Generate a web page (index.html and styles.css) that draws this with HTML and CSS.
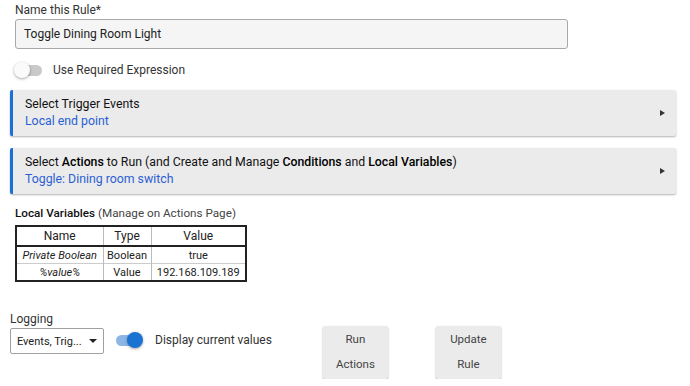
FILE: index.html
```html
<!DOCTYPE html>
<html lang="en">
<head>
    <meta charset="UTF-8">
    <meta name="viewport" content="width=device-width, initial-scale=1.0">
    <title>Rule</title>
    <link rel="stylesheet" href="styles.css">
</head>
<body>
<div class="page">

    <!-- Rule name -->
    <div class="name-field">
        <label class="field-label">Name this Rule*</label>
        <div class="text-input">Toggle Dining Room Light</div>
    </div>

    <!-- Required expression switch -->
    <div class="switch-row top-switch">
        <span class="switch"><span class="knob"></span></span>
        <span class="switch-text">Use Required Expression</span>
    </div>

    <!-- Trigger panel -->
    <div class="panel">
        <div class="panel-body">
            <div class="panel-title">Select Trigger Events</div>
            <div class="panel-sub">Local end point</div>
        </div>
        <span class="arrow"></span>
    </div>

    <!-- Actions panel -->
    <div class="panel">
        <div class="panel-body">
            <div class="panel-title">Select <b>Actions</b> to Run (and Create and Manage <b>Conditions</b> and <b>Local Variables</b>)</div>
            <div class="panel-sub">Toggle: Dining room switch</div>
        </div>
        <span class="arrow"></span>
    </div>

    <!-- Local variables -->
    <div class="vars">
        <div class="vars-title"><b>Local Variables</b> (Manage on Actions Page)</div>
        <table class="vars-table">
            <colgroup>
                <col class="col-name">
                <col class="col-type">
                <col class="col-value">
            </colgroup>
            <tr><th>Name</th><th>Type</th><th>Value</th></tr>
            <tr><td><i>Private Boolean</i></td><td>Boolean</td><td>true</td></tr>
            <tr><td><i>%value%</i></td><td>Value</td><td>192.168.109.189</td></tr>
        </table>
    </div>

    <!-- Bottom controls -->
    <div class="bottom">
        <div class="logging">
            <div class="small-label">Logging</div>
            <div class="select">
                <span>Events, Trig...</span>
                <span class="caret"></span>
            </div>
        </div>
        <div class="switch-row bottom-switch">
            <span class="switch on"><span class="knob"></span></span>
            <span class="switch-text">Display current values</span>
        </div>
        <div class="btn run-btn">Run<br>Actions</div>
        <div class="btn update-btn">Update<br>Rule</div>
    </div>

</div>
</body>
</html>
```

FILE: styles.css
```css
/* General */
body {
    margin: 0;
    font-family: Roboto, "Liberation Sans", sans-serif;
    font-size: 12px;
    color: #333;
    background: #fff;
}

.page {
    padding: 3px 14px 0 10px;
}

/* Name field */
.name-field {
    margin-left: 5px;
}

.field-label {
    display: block;
    line-height: 14px;
    margin-bottom: 2px;
}

.text-input {
    width: 543px;
    height: 28px;
    line-height: 28px;
    padding-left: 8px;
    border: 1px solid #a8a8a8;
    border-radius: 3px;
    background: #f5f5f5;
    color: #222;
}

/* Switches */
.switch-row {
    display: flex;
    align-items: center;
    height: 20px;
}

.top-switch {
    margin: 11px 0 10px 5px;
}

.switch {
    position: relative;
    display: inline-block;
    width: 24px;
    height: 11px;
    margin-left: 3px;
    border-radius: 6px;
    background: #c9c9c9;
}

.switch .knob {
    position: absolute;
    top: -3px;
    left: -4px;
    width: 16px;
    height: 16px;
    border-radius: 50%;
    background: #fafafa;
    box-shadow: 0 1px 3px rgba(0, 0, 0, 0.35);
}

.switch.on {
    margin-left: 0;
    background: #8db6e6;
}

.switch.on .knob {
    left: 11px;
    background: #1a73d1;
}

.switch-text {
    margin-left: 11px;
    color: #333;
}

/* Panels */
.panel {
    display: flex;
    align-items: center;
    justify-content: space-between;
    background: #ebebeb;
    border-left: 3px solid #1c6fd6;
    border-radius: 2px;
    box-shadow: 0 1px 2px rgba(0, 0, 0, 0.3);
    margin-bottom: 12px;
}

.panel-body {
    padding: 6px 12px;
}

.panel-title {
    line-height: 17px;
    font-size: 12.3px;
    color: #111;
}

.panel-title b {
    font-weight: 500;
    color: #000;
}

.panel-sub {
    line-height: 17px;
    font-size: 12.3px;
    color: #2a5fd3;
}

.arrow {
    width: 0;
    height: 0;
    margin-right: 11px;
    border-top: 3px solid transparent;
    border-bottom: 3px solid transparent;
    border-left: 5px solid #333;
}

/* Local variables */
.vars {
    margin: 12px 0 0 5px;
}

.vars-title {
    line-height: 14px;
    font-size: 11.7px;
    color: #444;
    margin-bottom: 5px;
}

.vars-title b {
    font-weight: 500;
    color: #111;
}

.vars-table {
    table-layout: fixed;
    width: 230px;
    border-collapse: collapse;
    border: 2px solid #222;
    font-size: 11px;
    color: #222;
    white-space: nowrap;
}

.vars-table th {
    font-weight: normal;
    font-size: 12px;
    height: 18px;
    border-bottom: 2px solid #222;
}

.vars-table th, .vars-table td {
    text-align: center;
    padding: 0 2px;
    border-left: 1px solid #bbb;
}

.vars-table td {
    height: 16px;
    border-top: 1px solid #ccc;
}

.col-name { width: 87px; }
.col-type { width: 48px; }
.col-value { width: 95px; }

/* Bottom row */
.bottom {
    display: flex;
    align-items: flex-start;
    margin-top: 30px;
}

.small-label {
    font-size: 12px;
    line-height: 14px;
    margin-bottom: 2px;
}

.select {
    display: flex;
    align-items: center;
    justify-content: space-between;
    width: 80px;
    height: 24px;
    padding: 0 6px 0 6px;
    border: 1px solid #a0a0a0;
    border-radius: 2px;
    font-size: 11px;
    color: #222;
}

.caret {
    width: 0;
    height: 0;
    border-left: 4px solid transparent;
    border-right: 4px solid transparent;
    border-top: 4px solid #222;
}

.bottom-switch {
    margin: 18px 0 0 12px;
}

.bottom-switch .switch-text {
    margin-left: 15px;
}

.btn {
    width: 65px;
    height: 53px;
    box-sizing: border-box;
    padding-top: 1px;
    margin-top: 14px;
    background: #ebebeb;
    border-radius: 2px;
    box-shadow: 0 1px 2px rgba(0, 0, 0, 0.35);
    text-align: center;
    font-size: 11.5px;
    line-height: 25px;
    color: #444;
}

.run-btn {
    margin-left: 51px;
}

.update-btn {
    margin-left: 48px;
}
```
